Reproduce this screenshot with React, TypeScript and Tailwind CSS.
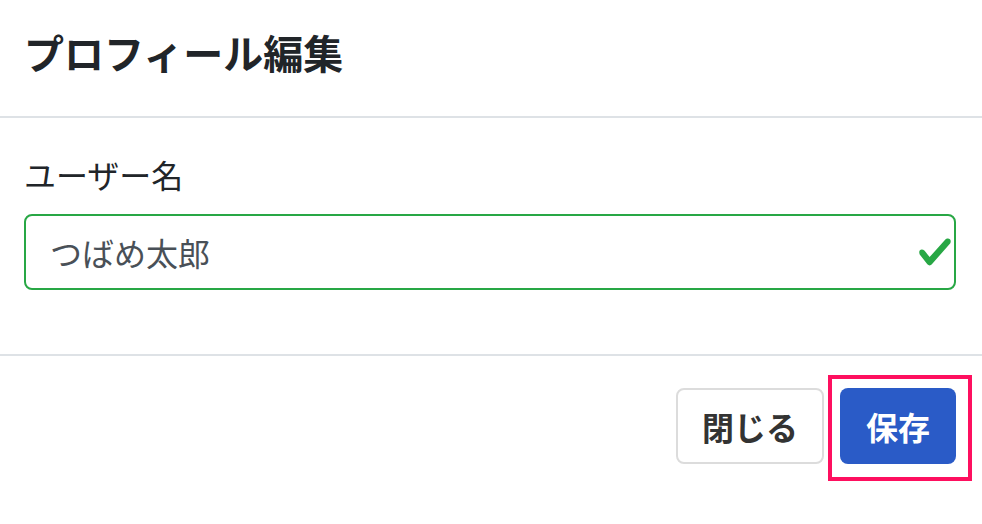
import React from "react";

export default function App() {
  return (
    <div className="w-[982px] h-[524px] bg-white text-[#212529] font-['Noto_Sans_CJK_JP','Noto_Sans',sans-serif] overflow-hidden">
      <div className="h-[118px] pl-[24px] pr-[26px] pt-[22px] border-b-2 border-[#dee2e6]">
        <h5 className="text-[40px] leading-[60px] font-bold m-0">プロフィール編集</h5>
      </div>
      <div className="pl-[24px] pr-[26px] pt-[32px] pb-[32px]">
        <div className="mb-[32px]">
          <label className="block text-[32px] leading-[48px] mb-[16px]">ユーザー名</label>
          <div className="relative h-[76px] border-2 border-[#28a745] rounded-[8px] pl-[24px] pr-[72px] flex items-center text-[32px] leading-[48px] text-[#495057]">
            <span>つばめ太郎</span>
            <svg
              className="absolute right-[1px] top-1/2 -translate-y-1/2"
              width="36"
              height="36"
              viewBox="0 0 8 8"
            >
              <path
                fill="#28a745"
                d="M2.3 6.73L.6 4.53c-.4-1.04.46-1.4 1.1-.8l1.1 1.4 3.4-3.8c.6-.63 1.6-.27 1.2.7l-4 4.6c-.43.5-.8.4-1.1.1z"
              />
            </svg>
          </div>
        </div>
      </div>
      <div className="border-t-2 border-[#dee2e6] pl-[24px] pr-[26px] pt-[32px] flex justify-end gap-[16px]">
        <button className="h-[76px] w-[148px] border-2 border-[#dcdcdc] rounded-[8px] bg-white text-[32px] leading-[48px] font-bold text-[#333333] flex items-center justify-center">
          閉じる
        </button>
        <div className="relative">
          <button className="h-[76px] w-[116px] rounded-[8px] bg-[#2a5bc7] text-[32px] leading-[48px] font-bold text-white flex items-center justify-center">
            保存
          </button>
          <div className="absolute -left-[12px] -top-[13px] -right-[16px] -bottom-[17px] border-4 border-[#fe0f5f] pointer-events-none" />
        </div>
      </div>
    </div>
  );
}
